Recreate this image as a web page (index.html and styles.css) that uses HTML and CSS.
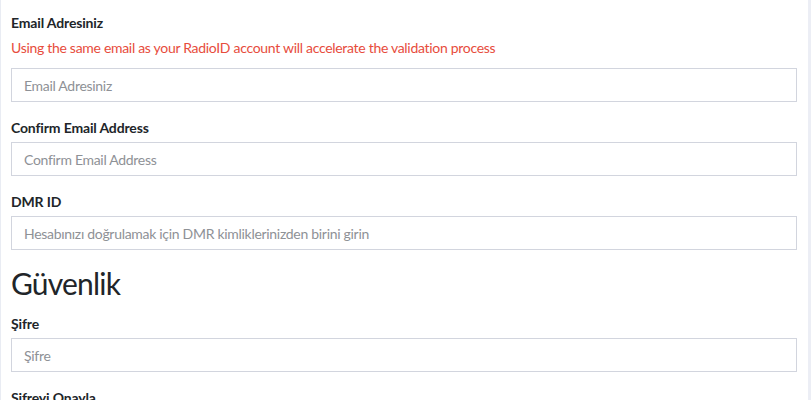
FILE: index.html
```html
<!DOCTYPE html>
<html lang="tr">
<head>
<meta charset="utf-8">
<title>Kayıt</title>
<link rel="stylesheet" href="styles.css">
</head>
<body>
<div class="page">
  <main class="content">
    <div class="form-group">
      <label class="label" for="email">Email Adresiniz</label>
      <p class="hint">Using the same email as your RadioID account will accelerate the validation process</p>
      <input class="input" id="email" type="email" placeholder="Email Adresiniz">
    </div>
    <div class="form-group">
      <label class="label" for="email2">Confirm Email Address</label>
      <input class="input" id="email2" type="email" placeholder="Confirm Email Address">
    </div>
    <div class="form-group">
      <label class="label" for="dmr">DMR ID</label>
      <input class="input" id="dmr" type="text" placeholder="Hesabınızı doğrulamak için DMR kimliklerinizden birini girin">
    </div>
    <h2 class="section-title">Güvenlik</h2>
    <div class="form-group">
      <label class="label" for="pw">Şifre</label>
      <input class="input" id="pw" type="password" placeholder="Şifre">
    </div>
    <div class="form-group">
      <label class="label" for="pw2">Şifreyi Onayla</label>
      <input class="input" id="pw2" type="password" placeholder="Şifreyi Onayla">
    </div>
  </main>
  <aside class="rail"></aside>
</div>
</body>
</html>
```

FILE: styles.css
```css
html, body {
  margin: 0;
  padding: 0;
  background: #ffffff;
}
body {
  font-family: "Source Sans Pro", "Lato", "Liberation Sans", sans-serif;
  color: #212529;
  font-size: 14px;
  line-height: 1.5;
  letter-spacing: -0.3px;
}
.page {
  display: flex;
  min-height: 400px;
  border-left: 1px solid #e9ecf3;
}
.content {
  flex: 1;
  padding: 12px 11px 0 10px;
}
.rail {
  width: 3px;
  background: #eceef5;
}
.form-group {
  display: flex;
  flex-direction: column;
  margin-bottom: 15px;
}
.label {
  font-weight: 700;
  font-size: 14px;
  line-height: 21px;
  margin-bottom: 4px;
  color: #212529;
  letter-spacing: -0.15px;
}
.hint {
  margin: 0 0 10px;
  color: #e74c3c;
  font-size: 14px;
  line-height: 21px;
}
.input {
  box-sizing: border-box;
  height: 34px;
  width: 100%;
  margin: 0;
  padding: 0 12px;
  border: 1px solid #d2d5de;
  border-radius: 0;
  font-family: inherit;
  font-size: 14px;
  letter-spacing: -0.3px;
  color: #495057;
  background: #fff;
  outline: none;
}
.input::placeholder {
  color: #8e9196;
}
.section-title {
  margin: 15px 0 12px;
  font-size: 30px;
  font-weight: 400;
  line-height: 36px;
  letter-spacing: -0.8px;
  color: #212529;
}
```
